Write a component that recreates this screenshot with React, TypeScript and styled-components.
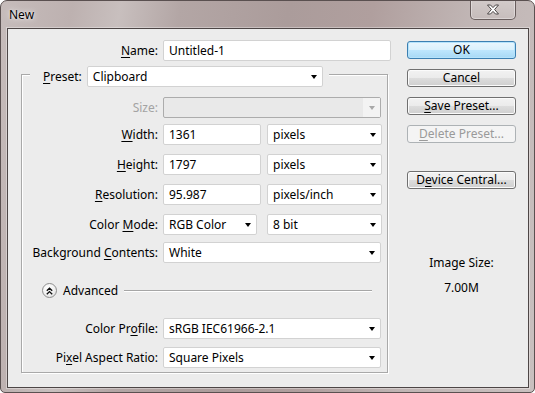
import React from "react";
import styled, { createGlobalStyle, css } from "styled-components";

const GlobalStyle = createGlobalStyle`
  html, body { margin: 0; padding: 0; background: #ffffff; }
  body {
    font-family: "Noto Sans", "Open Sans", sans-serif;
    font-size: 12px;
    color: #000;
  }
  * { box-sizing: border-box; }
`;

const Window = styled.div`
  width: 535px;
  height: 393px;
  display: flex;
  flex-direction: column;
  border: 1px solid #5a5050;
  border-radius: 7px 7px 5px 5px;
  padding: 0 5px 4px 6px;
  overflow: hidden;
  background: linear-gradient(
    100deg,
    #c6bcbb 0%,
    #bdb1b0 12%,
    #c8bfbe 20%,
    #b3a6a5 30%,
    #ab9c9b 48%,
    #b09f9e 62%,
    #c0b5b4 78%,
    #c9c0bf 100%
  );
`;

const TitleBar = styled.div`
  height: 27px;
  display: flex;
  align-items: flex-start;
`;

const Title = styled.div`
  margin: 6px 0 0 2px;
  line-height: 16px;
  text-shadow: 0 0 6px rgba(255, 255, 255, 0.9), 0 0 2px rgba(255, 255, 255, 0.8);
`;

const CloseButton = styled.div`
  margin: -1px 13px 0 auto;
  width: 46px;
  height: 20px;
  display: flex;
  align-items: center;
  justify-content: center;
  border: 1px solid rgba(70, 58, 58, 0.75);
  border-top: none;
  border-radius: 0 0 5px 5px;
  background: linear-gradient(rgba(255, 255, 255, 0.28), rgba(255, 255, 255, 0.08));
  box-shadow: inset 0 0 0 1px rgba(255, 255, 255, 0.35);
`;

const Client = styled.div`
  height: 360px;
  display: grid;
  grid-template-columns: 399px 109px;
  border: 1px solid #4d4646;
  background: #ececec;
  box-shadow: 0 0 0 1px rgba(255, 255, 255, 0.35);
`;

const LeftColumn = styled.div`
  display: flex;
  flex-direction: column;
  padding-top: 11px;
`;

const RightColumn = styled.div`
  display: flex;
  flex-direction: column;
  gap: 10px;
  padding-top: 12px;
`;

const Row = styled.div<{ $labelWidth: number; $top?: number }>`
  display: grid;
  grid-template-columns: ${(p) => p.$labelWidth}px auto;
  column-gap: 5px;
  align-items: center;
  height: 21px;
  margin-top: ${(p) => p.$top ?? 0}px;
`;

const Label = styled.div<{ $disabled?: boolean }>`
  text-align: right;
  white-space: nowrap;
  color: ${(p) => (p.$disabled ? "#a3a3a3" : "#000")};
`;

const Key = styled.span`
  text-decoration: underline;
  text-underline-offset: 2px;
`;

const Fields = styled.div<{ $gap: number }>`
  display: flex;
  gap: ${(p) => p.$gap}px;
`;

const fieldBox = css`
  height: 21px;
  display: flex;
  align-items: center;
  border: 1px solid #d2d2d2;
  border-radius: 2px;
  background: #fff;
  padding-left: 5px;
  white-space: nowrap;
`;

const TextBox = styled.div<{ $width: number }>`
  ${fieldBox};
  width: ${(p) => p.$width}px;
`;

const Select = styled.div<{ $width: number; $disabled?: boolean }>`
  ${fieldBox};
  width: ${(p) => p.$width}px;
  justify-content: space-between;
  padding-right: ${(p) => (p.$disabled ? 0 : 5)}px;
  ${(p) =>
    p.$disabled &&
    css`
      border-color: #acacac;
      background: #e9e9e9;
    `}
`;

const ArrowCell = styled.div`
  width: 17px;
  height: 100%;
  display: flex;
  align-items: center;
  justify-content: center;
  background: #f3f3f3;
`;

const Arrow = styled.span<{ $disabled?: boolean }>`
  width: 0;
  height: 0;
  border-left: 3.5px solid transparent;
  border-right: 3.5px solid transparent;
  border-top: 4px solid ${(p) => (p.$disabled ? "#a8a8a8" : "#000")};
`;

const GroupBox = styled.div`
  margin: 13px 0 0 13px;
  width: 367px;
  height: 299px;
  border: 1px solid #a9a9a9;
  box-shadow: inset 1px 1px 0 #fff, 1px 1px 0 #fff;
  display: flex;
  flex-direction: column;
`;

const GroupHeader = styled.div`
  margin: -9px 0 0 8px;
  width: fit-content;
  display: flex;
  align-items: center;
  gap: 5px;
  height: 21px;
  padding: 0 6px 0 13px;
  background: #ececec;
`;

const AdvancedRow = styled.div`
  margin: 20px 15px 0 20px;
  height: 15px;
  display: flex;
  align-items: center;
`;

const RoundButton = styled.div`
  width: 15px;
  height: 15px;
  border-radius: 50%;
  border: 1px solid #8e8e8e;
  background: radial-gradient(circle at 40% 35%, #ffffff 0%, #f2f2f2 50%, #d6d6d6 100%);
  display: flex;
  align-items: center;
  justify-content: center;
`;

const AdvancedText = styled.div`
  margin-left: 6px;
`;

const Rule = styled.div`
  flex: 1;
  margin-left: 6px;
  height: 2px;
  border-top: 1px solid #a6a6a6;
  border-bottom: 1px solid #fff;
`;

type Variant = "default" | "normal" | "disabled";

const Button = styled.div<{ $variant?: Variant }>`
  width: 109px;
  height: 18px;
  display: flex;
  align-items: center;
  justify-content: center;
  border: 1px solid #707070;
  border-radius: 3px;
  box-shadow: inset 0 0 0 1px #fbfbfb;
  background: linear-gradient(#f2f2f2 0%, #ebebeb 50%, #dddddd 51%, #cfcfcf 100%);
  line-height: 16px;
  ${(p) =>
    p.$variant === "default" &&
    css`
      border-color: #3c7fb1;
      box-shadow: inset 0 0 0 1px #b6e3fb;
      background: linear-gradient(#eaf6fd 0%, #d9f0fc 50%, #bee6fd 51%, #a7d9f5 100%);
    `}
  ${(p) =>
    p.$variant === "disabled" &&
    css`
      border-color: #adb2b5;
      box-shadow: none;
      background: #f4f4f4;
      color: #9a9a9a;
    `}
`;

const Spacer = styled.div`
  height: 8px;
`;

const InfoBlock = styled.div`
  margin-top: 56px;
  display: flex;
  flex-direction: column;
  align-items: center;
  gap: 9px;
  line-height: 16px;
`;

const CloseGlyph = () => (
  <svg width="14" height="11" viewBox="0 0 14 11">
    <path
      d="M1.5 1 H4.5 L7 3.6 L9.5 1 H12.5 L8.6 5.5 L12.5 10 H9.5 L7 7.4 L4.5 10 H1.5 L5.4 5.5 Z"
      fill="#fff"
      stroke="#4a4444"
      strokeWidth="1"
      strokeLinejoin="round"
    />
  </svg>
);

const ChevronsUp = () => (
  <svg width="7" height="8" viewBox="0 0 7 8">
    <path d="M0.8 3.8 L3.5 1.2 L6.2 3.8 M0.8 7.2 L3.5 4.6 L6.2 7.2" fill="none" stroke="#111" strokeWidth="1.4" />
  </svg>
);

const Dropdown = ({ width, value, disabled }: { width: number; value?: string; disabled?: boolean }) => (
  <Select $width={width} $disabled={disabled}>
    <span>{value}</span>
    {disabled ? (
      <ArrowCell>
        <Arrow $disabled />
      </ArrowCell>
    ) : (
      <Arrow />
    )}
  </Select>
);

const LW = 136;

export default function App() {
  return (
    <>
      <GlobalStyle />
      <Window>
        <TitleBar>
          <Title>New</Title>
          <CloseButton>
            <CloseGlyph />
          </CloseButton>
        </TitleBar>
        <Client>
          <LeftColumn>
            <Row $labelWidth={150}>
              <Label>
                <Key>N</Key>ame:
              </Label>
              <TextBox $width={228}>Untitled-1</TextBox>
            </Row>
            <GroupBox>
              <GroupHeader>
                <Label>
                  <Key>P</Key>reset:
                </Label>
                <Dropdown width={236} value="Clipboard" />
              </GroupHeader>
              <Row $labelWidth={LW} $top={10}>
                <Label $disabled>Size:</Label>
                <Dropdown width={218} disabled />
              </Row>
              <Row $labelWidth={LW} $top={6}>
                <Label>
                  <Key>W</Key>idth:
                </Label>
                <Fields $gap={6}>
                  <TextBox $width={98}>1361</TextBox>
                  <Dropdown width={115} value="pixels" />
                </Fields>
              </Row>
              <Row $labelWidth={LW} $top={9}>
                <Label>
                  <Key>H</Key>eight:
                </Label>
                <Fields $gap={6}>
                  <TextBox $width={98}>1797</TextBox>
                  <Dropdown width={115} value="pixels" />
                </Fields>
              </Row>
              <Row $labelWidth={LW} $top={9}>
                <Label>
                  <Key>R</Key>esolution:
                </Label>
                <Fields $gap={6}>
                  <TextBox $width={98}>95.987</TextBox>
                  <Dropdown width={115} value="pixels/inch" />
                </Fields>
              </Row>
              <Row $labelWidth={LW} $top={9}>
                <Label>
                  Color <Key>M</Key>ode:
                </Label>
                <Fields $gap={10}>
                  <Dropdown width={94} value="RGB Color" />
                  <Dropdown width={115} value="8 bit" />
                </Fields>
              </Row>
              <Row $labelWidth={LW} $top={7}>
                <Label>
                  Background <Key>C</Key>ontents:
                </Label>
                <Dropdown width={218} value="White" />
              </Row>
              <AdvancedRow>
                <RoundButton>
                  <ChevronsUp />
                </RoundButton>
                <AdvancedText>Advanced</AdvancedText>
                <Rule />
              </AdvancedRow>
              <Row $labelWidth={LW} $top={20}>
                <Label>
                  Color Pr<Key>o</Key>file:
                </Label>
                <Dropdown width={218} value="sRGB IEC61966-2.1" />
              </Row>
              <Row $labelWidth={LW} $top={8}>
                <Label>
                  Pi<Key>x</Key>el Aspect Ratio:
                </Label>
                <Dropdown width={218} value="Square Pixels" />
              </Row>
            </GroupBox>
          </LeftColumn>
          <RightColumn>
            <Button $variant="default">OK</Button>
            <Button>Cancel</Button>
            <Button>
              <span>
                <Key>S</Key>ave Preset...
              </span>
            </Button>
            <Button $variant="disabled">
              <span>
                <Key>D</Key>elete Preset...
              </span>
            </Button>
            <Spacer />
            <Button>
              <span>
                D<Key>e</Key>vice Central...
              </span>
            </Button>
            <InfoBlock>
              <div>Image Size:</div>
              <div>7.00M</div>
            </InfoBlock>
          </RightColumn>
        </Client>
      </Window>
    </>
  );
}
